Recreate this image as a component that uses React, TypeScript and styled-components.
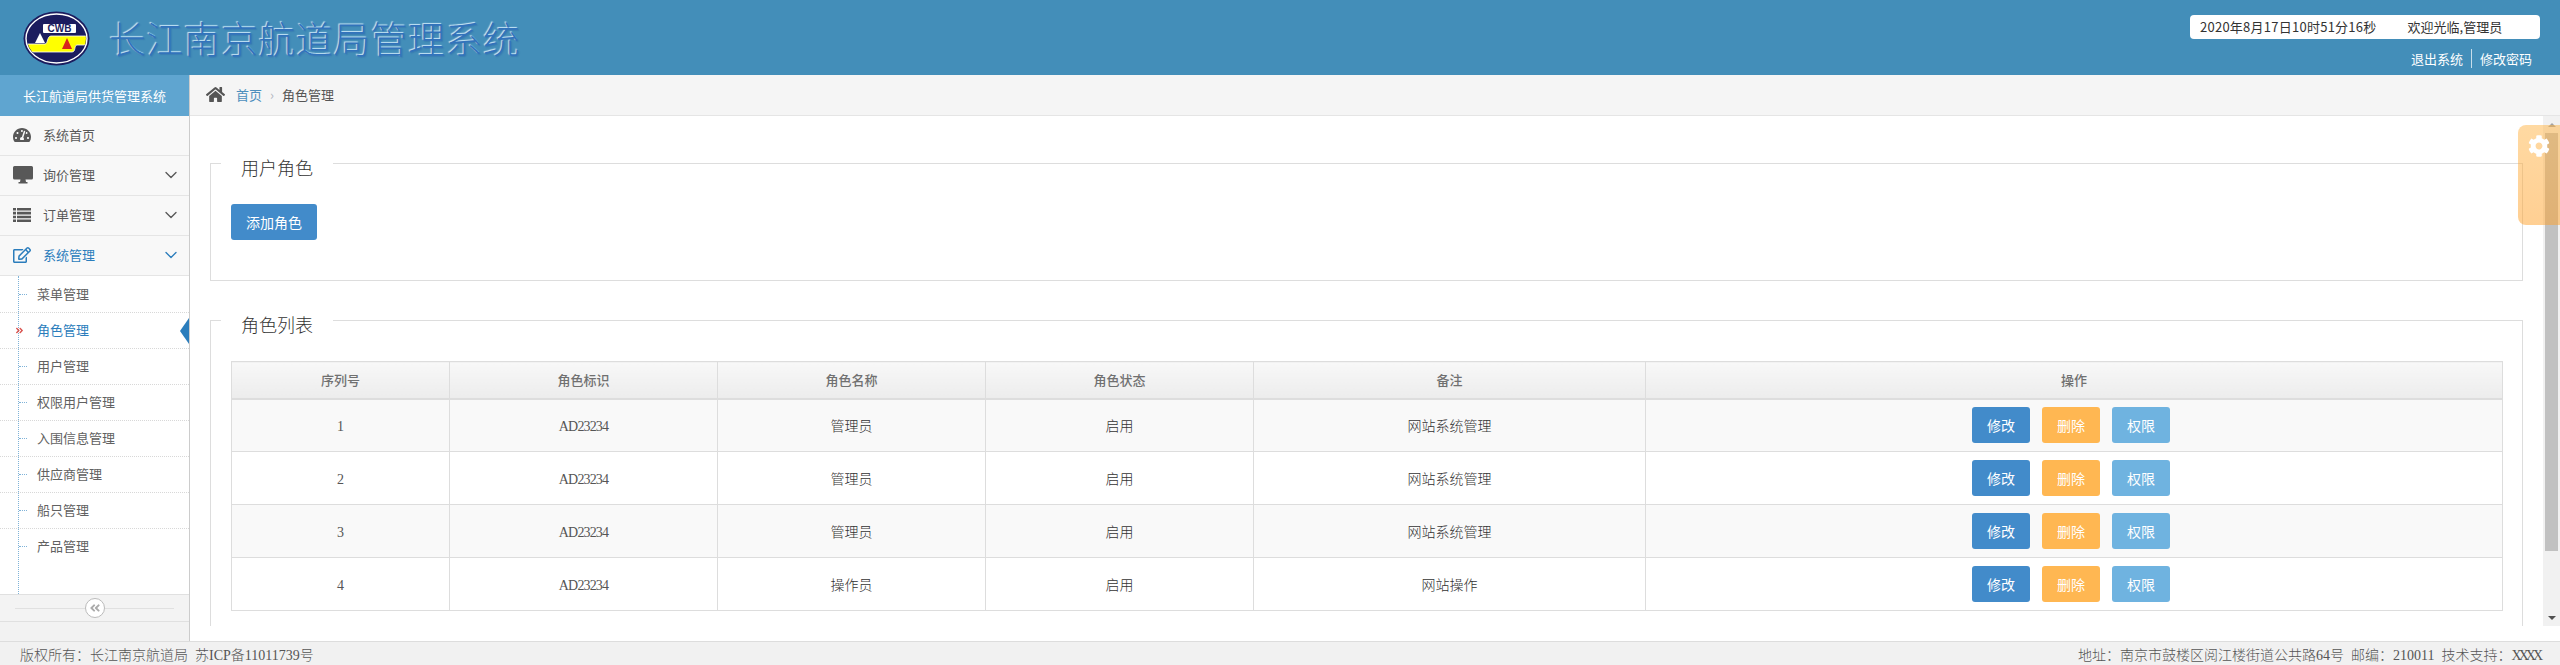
import React from "react";
import styled, { createGlobalStyle } from "styled-components";
import { FaAngleDoubleLeft, FaAngleDoubleRight, FaCog, FaHome, FaRegEdit, FaTachometerAlt } from "react-icons/fa";
import { ChevronDown } from "lucide-react";

const sansStack = `"Noto Sans CJK SC", "Noto Sans", sans-serif`;

const GlobalStyle = createGlobalStyle`
  html, body {
    margin: 0;
    padding: 0;
    height: 100%;
    overflow: hidden;
    background: #fff;
    font-family: ${sansStack};
    font-size: 13px;
    color: #333;
  }
  * { box-sizing: border-box; }
`;

const Page = styled.div`
  display: flex;
  flex-direction: column;
  width: 2560px;
  height: 665px;
  position: relative;
  overflow: hidden;
`;

/* header */
const Header = styled.header`
  flex: 0 0 75px;
  display: flex;
  align-items: flex-start;
  justify-content: space-between;
  background: #438eb9;
  padding: 11px 20px 0 23px;
`;
const Brand = styled.div`
  display: flex;
  align-items: flex-start;
  gap: 19px;
`;
const Title = styled.h1`
  margin: 2px 0 0;
  font-size: 37px;
  line-height: 50px;
  font-weight: 300;
  letter-spacing: 0.4px;
  color: #3273bb;
  text-shadow: -1px -1px 1px rgba(205, 235, 250, 0.95), 1px 1px 1px rgba(30, 80, 160, 0.25);
`;
const UserBlock = styled.div`
  display: flex;
  flex-direction: column;
  align-items: flex-end;
  padding-top: 4px;
  width: 350px;
`;
const UserInfo = styled.div`
  width: 350px;
  height: 24px;
  background: #fff;
  border-radius: 4px;
  padding-left: 10px;
  display: flex;
  align-items: center;
  line-height: 24px;
  color: #333;
  gap: 31px;
`;
const Clock = styled.span`
  letter-spacing: 0.25px;
`;
const HeaderLinks = styled.div`
  display: flex;
  align-items: center;
  height: 19px;
  margin-top: 10px;
  padding-right: 8px;
  color: #fff;
`;
const HeaderLink = styled.a`
  color: #fff;
  line-height: 19px;
  padding: 0 8px;
  & + & {
    border-left: 1px solid rgba(255, 255, 255, 0.7);
    padding-right: 0;
  }
`;

/* body */
const Body = styled.div`
  flex: 1;
  display: flex;
  min-height: 0;
`;
const Sidebar = styled.aside`
  flex: 0 0 190px;
  display: flex;
  flex-direction: column;
  background: #f2f2f2;
  border-right: 1px solid #ccc;
`;
const SideTitle = styled.div`
  flex: 0 0 41px;
  line-height: 41px;
  background: #5fa5d0;
  color: #fff;
  text-align: center;
`;
const MenuItem = styled.div<{ $open?: boolean }>`
  flex: 0 0 40px;
  display: flex;
  align-items: center;
  padding: 0 8px 2px 13px;
  background: #f8f8f8;
  border-bottom: 1px solid #e5e5e5;
  color: ${(p) => (p.$open ? "#2b7dbc" : "#585858")};
  &:first-of-type {
    flex-basis: 39px;
  }
`;
const MenuIcon = styled.span`
  width: 30px;
  flex: none;
  display: flex;
  align-items: center;
  font-size: 18px;
`;
const MenuLabel = styled.span`
  flex: 1;
`;
const SubMenu = styled.div`
  flex: 1;
  background: #fff;
  position: relative;
  padding-top: 1px;
  &::before {
    content: "";
    position: absolute;
    left: 18px;
    top: 0;
    bottom: 0;
    border-left: 1px dotted #7fb3d8;
  }
`;
const SubItem = styled.div<{ $active?: boolean }>`
  height: 36px;
  padding-left: 37px;
  line-height: 33px;
  position: relative;
  border-bottom: 1px dotted #d8d8d8;
  color: ${(p) => (p.$active ? "#2b7dbc" : "#616161")};
  &::before {
    content: "";
    position: absolute;
    left: 19px;
    top: 17px;
    width: 8px;
    border-top: 1px dotted #7fb3d8;
    display: ${(p) => (p.$active ? "none" : "block")};
  }
  &:last-child {
    border-bottom: 0;
  }
`;
const ActiveMark = styled(FaAngleDoubleRight)`
  position: absolute;
  left: 15px;
  top: 13px;
  font-size: 9px;
  color: #d9534f;
`;
const ActiveArrow = styled.span`
  position: absolute;
  right: 0;
  top: 5px;
  border-style: solid;
  border-width: 13px 9px 13px 0;
  border-color: transparent #2b7dbc transparent transparent;
`;
const Collapse = styled.div`
  flex: 0 0 28px;
  position: relative;
  background: #f3f3f3;
  border-top: 1px solid #e0e0e0;
  border-bottom: 1px solid #e0e0e0;
  margin-bottom: 19px;
  display: flex;
  align-items: center;
  justify-content: center;
  &::before {
    content: "";
    position: absolute;
    left: 15px;
    right: 15px;
    top: 13px;
    border-top: 1px solid #e0e0e0;
  }
`;
const CollapseButton = styled.span`
  width: 20px;
  height: 20px;
  border-radius: 50%;
  border: 1px solid #bbb;
  background: #fff;
  color: #aaa;
  font-size: 12px;
  display: flex;
  align-items: center;
  justify-content: center;
  position: relative;
`;

/* main */
const Main = styled.main`
  flex: 1;
  display: flex;
  flex-direction: column;
  min-width: 0;
  background: #fff;
`;
const Breadcrumb = styled.nav`
  flex: 0 0 41px;
  display: flex;
  align-items: center;
  padding: 0 0 1px 16px;
  background: #f5f5f5;
  border-bottom: 1px solid #e5e5e5;
  color: #555;
`;
const HomeIcon = styled(FaHome)`
  font-size: 19px;
  color: #555;
  margin-right: 11px;
`;
const CrumbLink = styled.a`
  color: #4c8fbd;
`;
const CrumbSep = styled.span`
  color: #b2b6bf;
  margin: 0 8px;
  font-size: 13px;
`;
const ScrollArea = styled.div`
  flex: 0 0 510px;
  display: flex;
  min-height: 0;
`;
const Content = styled.div`
  flex: 1;
  overflow: hidden;
  padding: 32px 20px 0;
`;
const ScrollRail = styled.div`
  flex: 0 0 17px;
  display: flex;
  flex-direction: column;
  align-items: center;
  background: #f1f1f1;
`;
const RailButton = styled.div<{ $down?: boolean }>`
  flex: 0 0 17px;
  display: flex;
  align-items: center;
  justify-content: center;
  &::before {
    content: "";
    border-left: 4px solid transparent;
    border-right: 4px solid transparent;
    ${(p) => (p.$down ? "border-top: 4px solid #505050;" : "border-bottom: 4px solid #a3a3a3;")}
  }
`;
const RailThumb = styled.div`
  flex: 0 0 418px;
  width: 13px;
  background: #c1c1c1;
`;
const RailSpace = styled.div`
  flex: 1;
`;
const Section = styled.fieldset`
  margin: 0 0 24px;
  padding: 0 20px 0;
  border: 1px solid #ddd;
  min-width: 0;
`;
const Legend = styled.legend`
  margin-left: -10px;
  padding: 7px 20px 0;
  font-size: 18px;
  line-height: 24px;
  font-weight: 300;
  color: #333;
`;
const AddButton = styled.button`
  display: block;
  margin: 25px 0 40px;
  height: 36px;
  width: 86px;
  padding: 0;
  border: 0;
  border-radius: 3px;
  background: #428bca;
  color: #fff;
  font: 14px ${sansStack};
`;
const Table = styled.table`
  width: 2271px;
  margin: 25px 0 85px;
  border-collapse: collapse;
  table-layout: fixed;
`;
const Column = styled.col<{ $w: number }>`
  width: ${(p) => p.$w}px;
`;
const Th = styled.th`
  height: 37px;
  padding: 0;
  font-size: 13px;
  font-weight: 500;
  color: #707070;
  background: linear-gradient(#f8f8f8, #ececec);
  border: 1px solid #ddd;
  border-bottom-width: 2px;
`;
const Row = styled.tr`
  &:nth-child(odd) {
    background: #f9f9f9;
  }
`;
const Td = styled.td`
  height: 53px;
  padding: 0;
  text-align: center;
  border: 1px solid #ddd;
  font-size: 14px;
  font-weight: 300;
  color: #333;
`;
const Latin = styled.span<{ $tight?: number }>`
  font-family: "Liberation Serif", serif;
  font-size: 14px;
  font-weight: 400;
  color: #555;
  letter-spacing: ${(p) => p.$tight ?? 0}px;
`;
const Actions = styled.div`
  display: flex;
  justify-content: center;
  gap: 12px;
  padding-right: 6px;
`;
const ActionButton = styled.button<{ $bg: string }>`
  width: 58px;
  height: 36px;
  padding: 0;
  border: 0;
  border-radius: 3px;
  background: ${(p) => p.$bg};
  color: #fff;
  font: 14px ${sansStack};
`;
const Settings = styled.div`
  position: absolute;
  right: 0;
  top: 125px;
  width: 42px;
  height: 100px;
  padding: 6px 0 0 10px;
  border-radius: 8px 0 0 8px;
  background: linear-gradient(rgba(255, 180, 70, 0.5), rgba(255, 160, 40, 0.5));
  color: #fff;
  font-size: 22px;
`;

/* footer */
const Footer = styled.footer`
  flex: 0 0 24px;
  display: flex;
  justify-content: space-between;
  align-items: center;
  padding: 0 20px;
  background: #f1f1f1;
  border-top: 1px solid #ddd;
  font-size: 14px;
  font-weight: 300;
  color: #555;
  white-space: pre;
`;

const Logo = () => (
  <svg width="67" height="55" viewBox="0 0 67 55">
    <ellipse cx="33.5" cy="27.5" rx="33" ry="27" fill="#1b1c5e" />
    <ellipse cx="33.5" cy="27.5" rx="30.5" ry="24.5" fill="none" stroke="#fff" strokeWidth="1.4" />
    <clipPath id="logo-clip">
      <ellipse cx="33.500" cy="27.5" rx="29.500" ry="23.5" />
    </clipPath>
    <g clipPath="url(#logo-clip)">
      <path d="M0 33H22C25 33 24 25 28 25H67V34H54C51 34 53 41 49 41H0Z" fill="#ffff00" stroke="#fff" strokeWidth="0.8" />
    </g>
    <rect x="20" y="13" width="33" height="9" rx="1" fill="#fff" />
    <text x="36.500" y="21" textAnchor="middle" fontSize="10" fontWeight="700" fontFamily="Liberation Sans" fill="#1b1c5e">
      CWB
    </text>
    <path d="M12 32l5-10 5 10z" fill="#fff" />
    <path d="M39 38l5-11 5 11z" fill="#d8261c" />
  </svg>
);

const DesktopIcon = () => (
  <svg width="20" height="18" viewBox="0 0 20 18" fill="currentColor">
    <path d="M1.500 0h17A1.500 1.500 0 0 1 20 1.500V12a1.500 1.500 0 0 1-1.500 1.500H12.500L13 16h1.500v1.500h-9V16H7l.5-2.500H1.500A1.500 1.500 0 0 1 0 12V1.500A1.500 1.500 0 0 1 1.500 0z" />
  </svg>
);

const ListIcon = () => (
  <svg width="18" height="14" viewBox="0 0 18 14" fill="currentColor">
    <path d="M0 0h3v2.500H0zM4 0h14v2.500H4zM0 3.800h3v2.700H0zM4 3.800h14v2.700H4zM0 7.700h3v2.600H0zM4 7.700h14v2.600H4zM0 11.500h3V14H0zM4 11.500h14V14H4z" />
  </svg>
);

const menu = [
  { label: "系统首页", icon: <FaTachometerAlt /> },
  { label: "询价管理", icon: <DesktopIcon />, caret: true },
  { label: "订单管理", icon: <ListIcon />, caret: true },
  { label: "系统管理", icon: <FaRegEdit />, caret: true, open: true },
];

const subMenu = ["菜单管理", "角色管理", "用户管理", "权限用户管理", "入围信息管理", "供应商管理", "船只管理", "产品管理"];

const columns = [
  { title: "序列号", w: 218 },
  { title: "角色标识", w: 268 },
  { title: "角色名称", w: 268 },
  { title: "角色状态", w: 268 },
  { title: "备注", w: 392 },
  { title: "操作", w: 857 },
];

const roles = [
  { id: 1, name: "管理员", note: "网站系统管理" },
  { id: 2, name: "管理员", note: "网站系统管理" },
  { id: 3, name: "管理员", note: "网站系统管理" },
  { id: 4, name: "操作员", note: "网站操作" },
];

export default function App() {
  return (
    <Page>
      <GlobalStyle />
      <Header>
        <Brand>
          <Logo />
          <Title>长江南京航道局管理系统</Title>
        </Brand>
        <UserBlock>
          <UserInfo>
            <Clock>2020年8月17日10时51分16秒</Clock>
            <span>欢迎光临,管理员</span>
          </UserInfo>
          <HeaderLinks>
            <HeaderLink>退出系统</HeaderLink>
            <HeaderLink>修改密码</HeaderLink>
          </HeaderLinks>
        </UserBlock>
      </Header>
      <Body>
        <Sidebar>
          <SideTitle>长江航道局供货管理系统</SideTitle>
          {menu.map((m) => (
            <MenuItem key={m.label} $open={m.open}>
              <MenuIcon>{m.icon}</MenuIcon>
              <MenuLabel>{m.label}</MenuLabel>
              {m.caret && <ChevronDown size={20} strokeWidth={1.6} />}
            </MenuItem>
          ))}
          <SubMenu>
            {subMenu.map((s) => (
              <SubItem key={s} $active={s === "角色管理"}>
                {s === "角色管理" && <ActiveMark />}
                {s}
                {s === "角色管理" && <ActiveArrow />}
              </SubItem>
            ))}
          </SubMenu>
          <Collapse>
            <CollapseButton>
              <FaAngleDoubleLeft />
            </CollapseButton>
          </Collapse>
        </Sidebar>
        <Main>
          <Breadcrumb>
            <HomeIcon />
            <CrumbLink>首页</CrumbLink>
            <CrumbSep>›</CrumbSep>
            <span>角色管理</span>
          </Breadcrumb>
          <ScrollArea>
            <Content>
              <Section>
                <Legend>用户角色</Legend>
                <AddButton>添加角色</AddButton>
              </Section>
              <Section>
                <Legend>角色列表</Legend>
                <Table>
                  <colgroup>
                    {columns.map((c) => (
                      <Column key={c.title} $w={c.w} />
                    ))}
                  </colgroup>
                  <thead>
                    <tr>
                      {columns.map((c) => (
                        <Th key={c.title}>{c.title}</Th>
                      ))}
                    </tr>
                  </thead>
                  <tbody>
                    {roles.map((r) => (
                      <Row key={r.id}>
                        <Td>
                          <Latin>{r.id}</Latin>
                        </Td>
                        <Td>
                          <Latin $tight={-0.85}>AD23234</Latin>
                        </Td>
                        <Td>{r.name}</Td>
                        <Td>启用</Td>
                        <Td>{r.note}</Td>
                        <Td>
                          <Actions>
                            <ActionButton $bg="#428bca">修改</ActionButton>
                            <ActionButton $bg="#ffb752">删除</ActionButton>
                            <ActionButton $bg="#6fb3e0">权限</ActionButton>
                          </Actions>
                        </Td>
                      </Row>
                    ))}
                  </tbody>
                </Table>
              </Section>
            </Content>
            <ScrollRail>
              <RailButton />
              <RailThumb />
              <RailSpace />
              <RailButton $down />
            </ScrollRail>
          </ScrollArea>
        </Main>
      </Body>
      <Footer>
        <span>
          版权所有：长江南京航道局<Latin $tight={3.5}> </Latin>苏<Latin>ICP</Latin>备<Latin>11011739</Latin>号
        </span>
        <span>
          地址：南京市鼓楼区阅江楼街道公共路<Latin>64</Latin>号<Latin $tight={3.5}> </Latin>邮编：<Latin>210011</Latin>
          <Latin $tight={3.5}> </Latin>技术支持：<Latin $tight={-3}>XXXX</Latin>
        </span>
      </Footer>
      <Settings>
        <FaCog />
      </Settings>
    </Page>
  );
}
